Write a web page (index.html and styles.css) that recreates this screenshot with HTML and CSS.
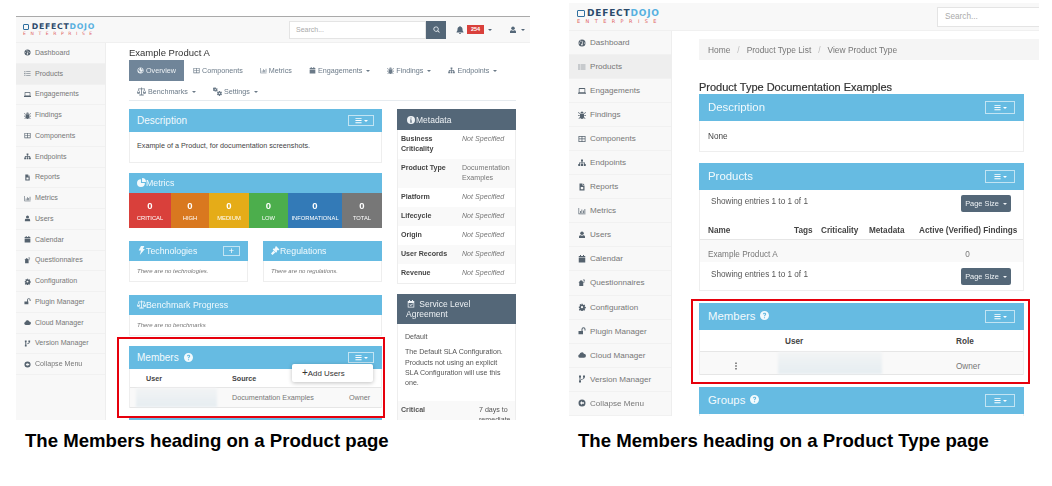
FILE: index.html
```html
<!DOCTYPE html>
<html lang="en">

<head>
    <meta charset="UTF-8">
    <title>Members heading</title>
    <link rel="stylesheet" href="styles.css">
</head>

<body>
    <svg class="sprite" xmlns="http://www.w3.org/2000/svg">
        <symbol id="i-gauge" viewBox="0 0 16 16"><path d="M8 1a7 7 0 1 0 0 14A7 7 0 0 0 8 1zM3 9a1 1 0 1 1 0-2 1 1 0 0 1 0 2zm2-4a1 1 0 1 1 0-2 1 1 0 0 1 0 2zm3-1.500a1 1 0 1 1 0 2 1 1 0 0 1 0-2zM8 13a1.800 1.800 0 0 1-.6-3.500L9.500 5l1 .4-1.600 4.400A1.800 1.800 0 0 1 8 13zm5-4a1 1 0 1 1 0-2 1 1 0 0 1 0 2z"/></symbol>
        <symbol id="i-globe" viewBox="0 0 16 16"><path d="M8 1a7 7 0 1 0 0 14A7 7 0 0 0 8 1zM3 5l2-2 2 .5L6 5 4.500 6 6 8l2 1-1 4-2-3-2-2zm7-3 3 2.500-1 1.500-3-1zm1 7 2.500-1-1 4-2 1.500z"/></symbol>
        <symbol id="i-list" viewBox="0 0 16 16"><path d="M1 3h2v2H1zm4 .3h10v1.400H5zM1 7h2v2H1zm4 .3h10v1.400H5zM1 11h2v2H1zm4 .3h10v1.400H5z"/></symbol>
        <symbol id="i-inbox" viewBox="0 0 16 16"><path fill-rule="evenodd" d="M3 2h10a1.500 1.500 0 0 1 1.500 1.500v7L16 12v1.500H0V12l1.500-1.500v-7A1.500 1.500 0 0 1 3 2zm0 2v6.500h10V4z"/></symbol>
        <symbol id="i-bug" viewBox="0 0 16 16"><path d="M5 4a3 3 0 0 1 6 0zM4.500 5h7A4 4 0 0 1 12 7v5a4 4 0 0 1-8 0V7a4 4 0 0 1 .5-2zM0 3l1-1 3 3-1 1zm16 0-1-1-3 3 1 1zM0 8.500h3.500V10H0zm16 0h-3.500V10H16zM1 15l3-3 1 1-3 3zm14 0-3-3-1 1 3 3z"/></symbol>
        <symbol id="i-table" viewBox="0 0 16 16"><path fill-rule="evenodd" d="M1 2h14v12H1zm1.500 1.500v3.700h4.700V3.500zm6.200 0v3.700h4.800V3.500zM2.500 8.700v3.800h4.700V8.700zm6.200 0v3.800h4.800V8.700z"/></symbol>
        <symbol id="i-sitemap" viewBox="0 0 16 16"><path d="M6 1h4v4H8.700v2H14v3h1.500v4h-4v-4h1V8.300H8.700V10H10v4H6v-4h1.300V8.300H3.500V10h1v4h-4v-4H2V7h5.300V5H6z"/></symbol>
        <symbol id="i-file" viewBox="0 0 16 16"><path fill-rule="evenodd" d="M3 1h6v4h4v10H3zm7 0 3 3h-3zM5.500 8v4.500h5V8z"/></symbol>
        <symbol id="i-chart" viewBox="0 0 16 16"><path d="M1 2h1.300v11H15v1.300H1zm3 6h1.500v4H4zm3-3h1.500v7H7zm3 2h1.500v5H10zm3-3h1.500v8H13z"/></symbol>
        <symbol id="i-user" viewBox="0 0 16 16"><circle cx="8" cy="4.500" r="3.500"/><path d="M2 14v-2.500C2 9.500 3.500 8.500 5 8.500c1.800 1.200 4.200 1.200 6 0 1.500 0 3 1 3 3V14z"/></symbol>
        <symbol id="i-cal" viewBox="0 0 16 16"><path d="M4 0h2v2h4V0h2v2h2.500v3h-13V2H4zM1.500 6h13v9h-13z"/></symbol>
        <symbol id="i-calcheck" viewBox="0 0 16 16"><path fill-rule="evenodd" d="M4 0h2v2h4V0h2v2h2.500v13h-13V2H4zM3 6v7.500h10V6zm2 3.500 1-1 1.500 1.500L11 7l1 1-4.500 4z"/></symbol>
        <symbol id="i-quest" viewBox="0 0 16 16"><path d="M6 2 1 7h1.500v7h8V7H12zM12 1a2 2 0 0 1 2 2c0 1-1.500 1.500-1.500 2.500h-1.200c0-1.500 1.500-1.800 1.500-2.500a.8.800 0 0 0-1.600 0H9.500A2 2 0 0 1 12 1zm-.6 5.200h1.200v1.200h-1.200z"/></symbol>
        <symbol id="i-gear" viewBox="0 0 16 16"><path fill-rule="evenodd" d="M6.500 1h3l.4 2 1.300.6 1.800-1.100 2 2-1.100 1.800.6 1.300 2 .4v3l-2 .4-.6 1.300 1.100 1.800-2 2-1.800-1.100-1.300.6-.4 2h-3l-.4-2-1.300-.6-1.800 1.100-2-2 1.100-1.800L3 10.700l-2-.4v-3l2-.4.600-1.300-1.100-1.800 2-2 1.800 1.100L7.600 3zM8 6a2.500 2.500 0 1 0 0 5 2.500 2.500 0 0 0 0-5z" transform="translate(.8 .6) scale(.9)"/></symbol>
        <symbol id="i-unlock" viewBox="0 0 16 16"><path d="M1 8h9v6.500H1zM7 8V4.500a4 4 0 0 1 8 0V7h-2V4.500a2 2 0 0 0-4 0V8z"/></symbol>
        <symbol id="i-cloud" viewBox="0 0 16 16"><path d="M4 13.500a3.500 3.500 0 0 1-.8-6.900A4.500 4.500 0 0 1 11.800 5.500 4 4 0 0 1 12 13.500z"/></symbol>
        <symbol id="i-branch" viewBox="0 0 16 16"><path fill-rule="evenodd" d="M2 1h4v4H5v6h1v4H2v-4h1V5H2zm8 0h4v4h-1c0 3-3 4-7 4.800V8.500c3-.6 5-1 5-3.500h-1z"/></symbol>
        <symbol id="i-back" viewBox="0 0 16 16"><path fill-rule="evenodd" d="M8 1a7 7 0 1 1 0 14A7 7 0 0 1 8 1zM8 4 4 8l4 4V9.500h4v-3H8z"/></symbol>
        <symbol id="i-scale" viewBox="0 0 16 16"><path fill-rule="evenodd" d="M7.300 1h1.400v1.500H14V4h-.5l2.500 6c0 1.200-1.300 2-2.700 2s-2.700-.8-2.700-2l2.300-6H8.700v9.500H12V15H4v-1.500h3.300V4H3.100l2.300 6c0 1.200-1.300 2-2.700 2S0 11.200 0 10l2.500-6H2V2.500h5.300zM2.700 5.500 1.300 9.500h2.800zm10.600 0-1.400 4h2.800z"/></symbol>
        <symbol id="i-cogs" viewBox="0 0 16 16"><path fill-rule="evenodd" d="M3 1h2l.3 1 1 .5 1-.5 1 1.700-.8.800v1l.8.800-1 1.700-1-.5-1 .5L5 8H3l-.3-1-1-.5-1 .5-1-1.700.8-.8v-1l-.8-.8 1-1.700 1 .5 1-.5zm1 2.600a1 1 0 1 0 0 2 1 1 0 0 0 0-2zM10.500 7h2l.3 1.200 1 .5 1.200-.5 1 1.700-1 .9v1.200l1 .9-1 1.700-1.200-.5-1 .5-.3 1.200h-2l-.3-1.200-1-.5-1.200.5-1-1.700 1-.9V10.800l-1-.9 1-1.700 1.200.5 1-.5zm1 3a1.300 1.300 0 1 0 0 2.600 1.300 1.300 0 0 0 0-2.600z"/></symbol>
        <symbol id="i-bolt" viewBox="0 0 16 16"><path d="M7 0h6l-2.500 5.500H14L5 16l2-8H3z"/></symbol>
        <symbol id="i-gavel" viewBox="0 0 16 16"><path d="M9 0l6 6-2 2-1-1-2 2 1 1-2 2-6-6 2-2 1 1 2-2-1-1zM4.500 8.500l3 3L2.500 16 0 13.500z"/></symbol>
        <symbol id="i-pie" viewBox="0 0 16 16"><path d="M7 2v7h7a7 7 0 1 1-7-7zm2-2a7 7 0 0 1 7 7H9z"/></symbol>
        <symbol id="i-info" viewBox="0 0 16 16"><path fill-rule="evenodd" d="M8 0a8 8 0 1 1 0 16A8 8 0 0 1 8 0zM7 3v2h2V3zM6 7v1.500h1v3H6V13h4v-1.500H9V7z"/></symbol>
        <symbol id="i-help" viewBox="0 0 16 16"><path fill-rule="evenodd" d="M8 0a8 8 0 1 1 0 16A8 8 0 0 1 8 0zM7 11v2h2v-2zM8 3C6.200 3 5 4 5 5.700h2c0-.6.400-1 1-1s1 .3 1 .9c0 1-2 1.300-2 3.700h2c0-1.600 2-1.900 2-3.900C11 3.900 9.700 3 8 3z"/></symbol>
        <symbol id="i-bell" viewBox="0 0 16 16"><path d="M8 0a1.200 1.200 0 0 1 1.200 1.300C11.500 1.800 13 3.700 13 6c0 4 1 5 2 6v1H1v-1c1-1 2-2 2-6 0-2.300 1.500-4.200 3.800-4.700A1.200 1.200 0 0 1 8 0zM6 14h4a2 2 0 0 1-4 0z"/></symbol>
        <symbol id="i-search" viewBox="0 0 16 16"><path fill-rule="evenodd" d="M7 1a6 6 0 0 1 4.800 9.500l3.700 3.700-1.300 1.300-3.700-3.700A6 6 0 1 1 7 1zm0 1.800a4.200 4.200 0 1 0 0 8.400 4.200 4.200 0 0 0 0-8.400z"/></symbol>
        <symbol id="i-bars" viewBox="0 0 16 16"><path d="M1 2h14v2.200H1zm0 4.900h14v2.200H1zm0 4.900h14V14H1z"/></symbol>
        <symbol id="i-dots" viewBox="0 0 16 16"><path d="M6.500 1h3v3h-3zm0 5.500h3v3h-3zm0 5.500h3v3h-3z"/></symbol>
    </svg>

    <div class="page">

        <section class="shot shot-product">
            <div class="app">
                <header class="navbar">
                    <div class="logo">
                        <div class="logo-top"><span class="logo-mark"></span><span class="logo-defect">DEFECT</span><span class="logo-dojo">DOJO</span></div>
                        <div class="logo-sub">ENTERPRISE</div>
                    </div>
                    <div class="search">
                        <span class="search-input">Search...</span>
                        <span class="search-btn"><svg class="i"><use href="#i-search"/></svg></span>
                    </div>
                    <div class="nav-bell">
                        <svg class="i"><use href="#i-bell"/></svg>
                        <span class="badge">254</span>
                        <span class="caret"></span>
                    </div>
                    <div class="nav-user">
                        <svg class="i"><use href="#i-user"/></svg>
                        <span class="caret"></span>
                    </div>
                </header>
                <div class="body-row">
                    <nav class="sidebar">
                        <a class="side-item"><svg class="i"><use href="#i-gauge"/></svg>Dashboard</a>
                        <a class="side-item active"><svg class="i"><use href="#i-list"/></svg>Products</a>
                        <a class="side-item"><svg class="i"><use href="#i-inbox"/></svg>Engagements</a>
                        <a class="side-item"><svg class="i"><use href="#i-bug"/></svg>Findings</a>
                        <a class="side-item"><svg class="i"><use href="#i-table"/></svg>Components</a>
                        <a class="side-item"><svg class="i"><use href="#i-sitemap"/></svg>Endpoints</a>
                        <a class="side-item"><svg class="i"><use href="#i-file"/></svg>Reports</a>
                        <a class="side-item"><svg class="i"><use href="#i-chart"/></svg>Metrics</a>
                        <a class="side-item"><svg class="i"><use href="#i-user"/></svg>Users</a>
                        <a class="side-item"><svg class="i"><use href="#i-cal"/></svg>Calendar</a>
                        <a class="side-item"><svg class="i"><use href="#i-quest"/></svg>Questionnaires</a>
                        <a class="side-item"><svg class="i"><use href="#i-gear"/></svg>Configuration</a>
                        <a class="side-item"><svg class="i"><use href="#i-unlock"/></svg>Plugin Manager</a>
                        <a class="side-item"><svg class="i"><use href="#i-cloud"/></svg>Cloud Manager</a>
                        <a class="side-item"><svg class="i"><use href="#i-branch"/></svg>Version Manager</a>
                        <a class="side-item"><svg class="i"><use href="#i-back"/></svg>Collapse Menu</a>
                    </nav>
                    <main class="content">
                        <h2 class="page-title">Example Product A</h2>
                        <div class="tabs">
                            <a class="tab active"><svg class="i"><use href="#i-globe"/></svg>Overview</a>
                            <a class="tab"><svg class="i"><use href="#i-table"/></svg>Components</a>
                            <a class="tab"><svg class="i"><use href="#i-chart"/></svg>Metrics</a>
                            <a class="tab"><svg class="i"><use href="#i-cal"/></svg>Engagements<span class="caret"></span></a>
                            <a class="tab"><svg class="i"><use href="#i-bug"/></svg>Findings<span class="caret"></span></a>
                            <a class="tab"><svg class="i"><use href="#i-sitemap"/></svg>Endpoints<span class="caret"></span></a>
                            <a class="tab tab-wide"><svg class="i"><use href="#i-scale"/></svg>Benchmarks<span class="caret"></span></a>
                            <a class="tab tab-wide"><svg class="i"><use href="#i-cogs"/></svg>Settings<span class="caret"></span></a>
                        </div>
                        <div class="columns">
                            <div class="col-main">
                                <div class="panel panel-desc">
                                    <div class="panel-head">Description<span class="menu-btn"><svg class="i"><use href="#i-bars"/></svg><span class="caret"></span></span></div>
                                    <p class="panel-text">Example of a Product, for documentation screenshots.</p>
                                </div>
                                <div class="panel panel-metrics">
                                    <div class="panel-head head-sm"><svg class="i"><use href="#i-pie"/></svg>Metrics</div>
                                    <div class="metric-row">
                                        <div class="metric m-critical"><b>0</b><span>CRITICAL</span></div>
                                        <div class="metric m-high"><b>0</b><span>HIGH</span></div>
                                        <div class="metric m-medium"><b>0</b><span>MEDIUM</span></div>
                                        <div class="metric m-low"><b>0</b><span>LOW</span></div>
                                        <div class="metric m-info"><b>0</b><span>INFORMATIONAL</span></div>
                                        <div class="metric m-total"><b>0</b><span>TOTAL</span></div>
                                    </div>
                                </div>
                                <div class="panel-pair">
                                    <div class="panel panel-small">
                                        <div class="panel-head head-sm"><svg class="i"><use href="#i-bolt"/></svg>Technologies<span class="menu-btn menu-plus">+</span></div>
                                        <p class="panel-note">There are no technologies.</p>
                                    </div>
                                    <div class="panel panel-small">
                                        <div class="panel-head head-sm"><svg class="i"><use href="#i-gavel"/></svg>Regulations</div>
                                        <p class="panel-note">There are no regulations.</p>
                                    </div>
                                </div>
                                <div class="panel panel-small panel-bench">
                                    <div class="panel-head head-sm"><svg class="i"><use href="#i-scale"/></svg>Benchmark Progress</div>
                                    <p class="panel-note">There are no benchmarks</p>
                                </div>
                                <div class="panel panel-members">
                                    <div class="panel-head">Members<svg class="i help"><use href="#i-help"/></svg><span class="menu-btn"><svg class="i"><use href="#i-bars"/></svg><span class="caret"></span></span></div>
                                    <div class="member-grid member-head"><span>User</span><span>Source</span><span></span></div>
                                    <div class="member-grid member-row"><span class="blurred"></span><span>Documentation Examples</span><span>Owner</span></div>
                                    <div class="dropdown"><span class="plus">+</span>Add Users</div>
                                </div>
                                <div class="panel-head panel-next"></div>
                            </div>
                            <aside class="col-side">
                                <div class="panel-dark">
                                    <div class="dark-head"><svg class="i"><use href="#i-info"/></svg>Metadata</div>
                                    <div class="meta-row tall"><b>Business Criticality</b><i>Not Specified</i></div>
                                    <div class="meta-row tall odd"><b>Product Type</b><span>Documentation Examples</span></div>
                                    <div class="meta-row"><b>Platform</b><i>Not Specified</i></div>
                                    <div class="meta-row odd"><b>Lifecycle</b><i>Not Specified</i></div>
                                    <div class="meta-row"><b>Origin</b><i>Not Specified</i></div>
                                    <div class="meta-row odd"><b>User Records</b><i>Not Specified</i></div>
                                    <div class="meta-row"><b>Revenue</b><i>Not Specified</i></div>
                                </div>
                                <div class="panel-dark">
                                    <div class="dark-head dark-head-sla"><svg class="i"><use href="#i-calcheck"/></svg> Service Level<br>Agreement</div>
                                    <div class="sla-body">
                                        <p>Default</p>
                                        <p>The Default SLA Configuration. Products not using an explicit SLA Configuration will use this one.</p>
                                    </div>
                                    <div class="sla-row"><b>Critical</b><span>7 days to remediate</span></div>
                                </div>
                            </aside>
                        </div>
                    </main>
                </div>
            </div>
            <div class="callout"></div>
        </section>

        <section class="shot shot-type">
            <div class="app">
                <header class="navbar">
                    <div class="logo">
                        <div class="logo-top"><span class="logo-mark"></span><span class="logo-defect">DEFECT</span><span class="logo-dojo">DOJO</span></div>
                        <div class="logo-sub">ENTERPRISE</div>
                    </div>
                    <div class="search"><span class="search-input">Search...</span></div>
                </header>
                <div class="body-row">
                    <nav class="sidebar">
                        <a class="side-item"><svg class="i"><use href="#i-gauge"/></svg>Dashboard</a>
                        <a class="side-item active"><svg class="i"><use href="#i-list"/></svg>Products</a>
                        <a class="side-item"><svg class="i"><use href="#i-inbox"/></svg>Engagements</a>
                        <a class="side-item"><svg class="i"><use href="#i-bug"/></svg>Findings</a>
                        <a class="side-item"><svg class="i"><use href="#i-table"/></svg>Components</a>
                        <a class="side-item"><svg class="i"><use href="#i-sitemap"/></svg>Endpoints</a>
                        <a class="side-item"><svg class="i"><use href="#i-file"/></svg>Reports</a>
                        <a class="side-item"><svg class="i"><use href="#i-chart"/></svg>Metrics</a>
                        <a class="side-item"><svg class="i"><use href="#i-user"/></svg>Users</a>
                        <a class="side-item"><svg class="i"><use href="#i-cal"/></svg>Calendar</a>
                        <a class="side-item"><svg class="i"><use href="#i-quest"/></svg>Questionnaires</a>
                        <a class="side-item"><svg class="i"><use href="#i-gear"/></svg>Configuration</a>
                        <a class="side-item"><svg class="i"><use href="#i-unlock"/></svg>Plugin Manager</a>
                        <a class="side-item"><svg class="i"><use href="#i-cloud"/></svg>Cloud Manager</a>
                        <a class="side-item"><svg class="i"><use href="#i-branch"/></svg>Version Manager</a>
                        <a class="side-item"><svg class="i"><use href="#i-back"/></svg>Collapse Menu</a>
                    </nav>
                    <main class="content">
                        <div class="breadcrumb">
                            <span>Home</span><em>/</em><span>Product Type List</span><em>/</em><span>View Product Type</span>
                        </div>
                        <h2 class="page-title">Product Type Documentation Examples</h2>
                        <div class="panel panel-desc">
                            <div class="panel-head">Description<span class="menu-btn"><svg class="i"><use href="#i-bars"/></svg><span class="caret"></span></span></div>
                            <p class="panel-text">None</p>
                        </div>
                        <div class="panel panel-products">
                            <div class="panel-head">Products<span class="menu-btn"><svg class="i"><use href="#i-bars"/></svg><span class="caret"></span></span></div>
                            <div class="entries"><span class="entries-text">Showing entries 1 to 1 of 1</span><span class="page-size">Page Size<span class="caret"></span></span></div>
                            <div class="product-grid product-head"><span>Name</span><span>Tags</span><span>Criticality</span><span>Metadata</span><span class="center">Active (Verified) Findings</span></div>
                            <div class="product-grid product-row"><span>Example Product A</span><span></span><span></span><span></span><span class="center">0</span></div>
                            <div class="entries entries-foot"><span class="entries-text">Showing entries 1 to 1 of 1</span><span class="page-size">Page Size<span class="caret"></span></span></div>
                        </div>
                        <div class="panel panel-members">
                            <div class="panel-head">Members<svg class="i help"><use href="#i-help"/></svg><span class="menu-btn"><svg class="i"><use href="#i-bars"/></svg><span class="caret"></span></span></div>
                            <div class="member-grid member-head"><span></span><span>User</span><span>Role</span></div>
                            <div class="member-grid member-row"><span class="dots"><svg class="i"><use href="#i-dots"/></svg></span><span class="blurred"></span><span class="role">Owner</span></div>
                        </div>
                        <div class="panel panel-groups">
                            <div class="panel-head">Groups<svg class="i help"><use href="#i-help"/></svg><span class="menu-btn"><svg class="i"><use href="#i-bars"/></svg><span class="caret"></span></span></div>
                        </div>
                    </main>
                </div>
            </div>
            <div class="callout"></div>
        </section>

        <p class="caption">The Members heading on a Product page</p>
        <p class="caption">The Members heading on a Product Type page</p>
    </div>
</body>

</html>
```

FILE: styles.css
```css
* {
    box-sizing: border-box;
}

body {
    margin: 0;
    background: #fff;
    font-family: "Liberation Sans", Arial, sans-serif;
    color: #333;
}

p,
h2 {
    margin: 0;
    font-weight: normal;
}

.sprite {
    display: none;
}

.page {
    display: grid;
    grid-template-columns: 553px 483px;
    grid-template-rows: 431px auto;
    padding-left: 16px;
}

.caption {
    padding-left: 9px;
    font-size: 18.600px;
    line-height: 20px;
    font-weight: bold;
    color: #000;
}

/* one screenshot */
.shot {
    position: relative;
}

.app {
    overflow: hidden;
    filter: blur(0.4px);
}

.shot-product {
    width: 514px;
    height: 404px;
    margin-top: 16px;
}

.shot-product .app {
    height: 404px;
    border-top: 1px solid #aaa;
}

.shot-type {
    width: 470px;
    height: 413px;
    margin-top: 3px;
}

.shot-type .app {
    height: 413px;
}

.callout {
    position: absolute;
    border: 2px solid #e6000c;
}

.shot-product .callout {
    left: 101px;
    top: 321px;
    width: 268px;
    height: 81px;
}

.shot-type .callout {
    left: 122px;
    top: 296px;
    width: 339px;
    height: 85px;
}

.i {
    display: inline-block;
    width: 1em;
    height: 1em;
    fill: currentColor;
    flex: none;
}

.caret {
    display: inline-block;
    width: 0;
    height: 0;
    margin-left: 4px;
    vertical-align: middle;
    border-top: 2px solid currentColor;
    border-left: 2px solid transparent;
    border-right: 2px solid transparent;
}

/* top bar */
.navbar {
    display: flex;
    align-items: center;
    background: #f8f8f8;
    border-bottom: 1px solid #f0f0f0;
}

.shot-product .navbar {
    height: 26px;
    padding-left: 7px;
}

.shot-type .navbar {
    height: 28px;
    padding-left: 8px;
}

.logo {
    display: flex;
    flex-direction: column;
    font-family: "DejaVu Sans", sans-serif;
    font-weight: bold;
    white-space: nowrap;
}

.logo-top {
    display: flex;
    align-items: center;
    line-height: 1;
}

.logo-mark {
    display: inline-block;
    border: 1.500px solid #2f6f9f;
    border-radius: 1px;
}

.logo-defect {
    color: #2b4a6b;
}

.logo-dojo {
    color: #57b0e0;
}

.logo-sub {
    color: #e0605f;
    font-weight: normal;
}

.shot-product .logo {
    width: 72px;
}

.shot-product .logo-top {
    font-size: 7.800px;
    letter-spacing: 0.7px;
}

.shot-product .logo-mark {
    width: 7px;
    height: 6px;
    margin-right: 3px;
}

.shot-product .logo-sub {
    font-size: 4.500px;
    line-height: 5px;
    letter-spacing: 4.600px;
}

.shot-type .logo {
    width: 83px;
}

.shot-type .logo-top {
    font-size: 9px;
    letter-spacing: 0.8px;
}

.shot-type .logo-mark {
    width: 8px;
    height: 7px;
    margin-right: 2px;
}

.shot-type .logo-sub {
    font-size: 5px;
    line-height: 6px;
    letter-spacing: 5.400px;
}

.search {
    display: flex;
}

.search-input {
    display: flex;
    align-items: center;
    background: #fff;
    border: 1px solid #e4e4e4;
    color: #aaa;
}

.shot-product .search {
    margin-left: 194px;
}

.shot-product .search-input {
    width: 137px;
    height: 18px;
    padding-left: 6px;
    font-size: 7px;
}

.search-btn {
    display: flex;
    align-items: center;
    justify-content: center;
    width: 20px;
    height: 18px;
    background: #546778;
    color: #e8eef2;
    font-size: 7px;
}

.shot-type .search {
    margin-left: 277px;
}

.shot-type .search-input {
    width: 103px;
    height: 20px;
    padding-left: 7px;
    font-size: 8.200px;
    border-right: 0;
}

.nav-bell,
.nav-user {
    display: flex;
    align-items: center;
    color: #546778;
    font-size: 8px;
}

.nav-bell {
    margin-left: 10px;
}

.nav-user {
    margin-left: 17px;
}

.badge {
    margin-left: 3px;
    padding: 1px 4px;
    background: #d9403b;
    color: #fff;
    font-size: 5.500px;
    line-height: 7px;
    font-weight: bold;
}

/* sidebar */
.body-row {
    display: flex;
}

.sidebar {
    flex: none;
    background: #f8f8f8;
    border-right: 1px solid #eee;
}

.shot-product .sidebar {
    width: 90px;
    height: 380px;
}

.shot-type .sidebar {
    width: 103px;
    height: 385px;
}

.side-item {
    display: flex;
    align-items: center;
    border-bottom: 1px solid #f1f1f1;
    color: #777;
    white-space: nowrap;
}

.side-item .i {
    color: #55626e;
}

.side-item.active {
    background: #eee;
}

.shot-product .side-item {
    height: 20.750px;
    padding-left: 8px;
    font-size: 7.100px;
}

.shot-product .side-item .i {
    width: 7px;
    height: 7px;
    margin-right: 4px;
}

.shot-type .side-item {
    height: 24.060px;
    padding-left: 9px;
    font-size: 8.100px;
}

.shot-type .side-item .i {
    width: 8px;
    height: 8px;
    margin-right: 4px;
}

/* main area */
.content {
    flex: none;
}

.shot-product .content {
    width: 424px;
    padding: 1px 0 0 23px;
}

.shot-type .content {
    width: 367px;
    padding: 8px 0 0 27px;
}

.page-title {
    color: #333;
}

.shot-product .page-title {
    font-size: 9.500px;
    line-height: 16px;
    padding-top: 1px;
    height: 16px;
}

.shot-type .page-title {
    margin-top: 20px;
    font-size: 11px;
    line-height: 14px;
    -webkit-text-stroke: 0.2px #333;
}

.breadcrumb {
    display: flex;
    align-items: center;
    width: 340px;
    height: 21px;
    padding-left: 9px;
    background: #f5f5f5;
    color: #777;
    font-size: 8.400px;
}

.breadcrumb em {
    margin: 0 7px;
    color: #bbb;
    font-style: normal;
}

.tabs {
    display: flex;
    flex-wrap: wrap;
    column-gap: 1px;
    width: 387px;
    height: 41px;
    border-bottom: 1px solid #e6ebef;
}

.tab {
    display: flex;
    align-items: center;
    height: 21px;
    padding: 0 8px;
    color: #6b7a88;
    font-size: 7.200px;
    white-space: nowrap;
}

.tab .i {
    width: 7px;
    height: 7px;
    margin-right: 2px;
}

.tab.active {
    background: #708599;
    color: #eef2f5;
}

.tab-wide .i {
    width: 9px;
    height: 9px;
}

.columns {
    display: flex;
    gap: 15px;
    margin-top: 8px;
}

.col-main {
    width: 253px;
    flex: none;
}

.col-side {
    width: 119px;
    flex: none;
}

/* panels */
.panel {
    position: relative;
    background: #fff;
    border: 1px solid #eee;
    border-top: 0;
}

.panel-head {
    display: flex;
    align-items: center;
    background: #66bbe2;
    color: #f2fafd;
    white-space: nowrap;
}

.panel .panel-head {
    margin: 0 -1px;
}

.shot-product .panel-head {
    height: 23px;
    padding: 0 8px 1px;
    font-size: 10px;
}

.shot-type .panel-head {
    height: 27px;
    padding: 0 9px 2px;
    font-size: 11.400px;
}

.shot-product .panel-head.head-sm {
    height: 20px;
    font-size: 8.800px;
}

.panel-head .i {
    width: 9px;
    height: 9px;
}

.panel-head .help {
    margin-left: 5px;
}

.menu-btn {
    display: flex;
    align-items: center;
    justify-content: center;
    margin-left: auto;
    border: 1px solid rgba(255, 255, 255, 0.6);
    color: #fff;
}

.shot-product .menu-btn {
    width: 26px;
    height: 11px;
    margin-top: 1px;
}

.shot-type .menu-btn {
    width: 30px;
    height: 13px;
    margin-top: 2px;
}

.panel-head .menu-btn .i {
    width: 7px;
    height: 7px;
}

.menu-btn .caret {
    margin-left: 2px;
}

.shot-product .menu-plus {
    width: 17px;
    height: 10px;
    font-size: 9px;
    line-height: 1;
}

.panel-text {
    color: #444;
}

.shot-product .panel-text {
    padding: 9px 7px;
    font-size: 7.200px;
    line-height: 10px;
}

.shot-type .panel-text {
    padding: 11px 8px;
    font-size: 8.200px;
    line-height: 10px;
}

.shot-product .panel-desc {
    height: 54px;
}

.shot-type .panel-desc {
    height: 58px;
}

.panel-metrics {
    height: 55px;
    margin-top: 10px;
    border-bottom: 0;
}

.metric-row {
    display: flex;
    height: 35px;
    margin: 0 -1px;
}

.metric {
    display: flex;
    flex-direction: column;
    align-items: center;
    color: #fff;
    padding-top: 7px;
}

.metric b {
    font-size: 9.500px;
    line-height: 12px;
}

.metric span {
    font-size: 5.800px;
    line-height: 9px;
    margin-top: 2px;
}

.m-critical {
    width: 42px;
    background: #d9403b;
}

.m-high {
    width: 38px;
    background: #d9781f;
}

.m-medium {
    width: 40px;
    background: #e5ac18;
}

.m-low {
    width: 39px;
    background: #4cae4c;
}

.m-info {
    width: 54px;
    background: #337ab7;
}

.m-total {
    width: 40px;
    background: #777;
}

.panel-pair {
    display: flex;
    justify-content: space-between;
    margin-top: 13px;
}

.panel-pair .panel-small {
    width: 119px;
}

.panel-small {
    height: 41px;
}

.panel-bench {
    margin-top: 13px;
}

.panel-note {
    padding: 6px 7px;
    color: #777;
    font-size: 6px;
    line-height: 9px;
    font-style: italic;
}

/* members */
.shot-product .panel-members {
    height: 62px;
    margin-top: 10px;
}

.shot-product .member-grid {
    display: grid;
    grid-template-columns: 102px 117px 1fr;
    align-items: center;
    font-size: 7.200px;
}

.shot-product .member-head {
    height: 19px;
    padding-top: 1px;
    border-bottom: 1px solid #e6e6e6;
}

.shot-product .member-head span:first-child {
    padding-left: 16px;
}

.shot-product .member-row {
    height: 20px;
}

.member-head {
    font-weight: bold;
    color: #444;
}

.member-row {
    background: #f9f9f9;
    border-bottom: 1px solid #e6e6e6;
    color: #777;
}

.blurred {
    display: block;
    height: 100%;
    background: linear-gradient(180deg, #f2f4f5, #e6edf1);
    filter: blur(1px);
}

.shot-product .blurred {
    width: 81px;
    margin-left: 6px;
}

.dropdown {
    position: absolute;
    left: 162px;
    top: 18px;
    width: 81px;
    height: 18px;
    padding-left: 10px;
    background: #fff;
    border-radius: 2px;
    box-shadow: 0 1px 4px rgba(0, 0, 0, 0.25);
    color: #333;
    font-size: 7.900px;
    line-height: 18px;
    white-space: nowrap;
}

.plus {
    font-size: 10px;
}

.panel-next {
    height: 10px;
    margin-top: 10px;
}

/* side column */
.panel-dark {
    background: #fff;
    border: 1px solid #eee;
    border-top: 0;
    margin-bottom: 10px;
}

.dark-head {
    display: flex;
    align-items: center;
    gap: 1px;
    height: 21px;
    padding-left: 10px;
    margin: 0 -1px;
    background: #546778;
    color: #eef2f5;
    font-size: 8.500px;
}

.dark-head .i {
    width: 8px;
    height: 8px;
}

.dark-head-sla {
    display: block;
    height: 30px;
    padding: 6px 9px;
    line-height: 9.500px;
}

.dark-head-sla .i {
    margin: 0 2px 0 1px;
    vertical-align: -1px;
}

.meta-row {
    display: grid;
    grid-template-columns: 61px 1fr;
    align-items: center;
    height: 19px;
    padding-left: 3px;
    font-size: 7.100px;
    line-height: 10.200px;
    background: #fff;
}

.meta-row.tall {
    height: 29px;
    align-items: start;
    padding-top: 4px;
}

.meta-row.odd {
    background: #f9f9f9;
}

.meta-row b {
    color: #444;
}

.meta-row i,
.meta-row span {
    color: #777;
}

.sla-body {
    height: 77px;
    padding: 8px 7px;
    color: #555;
    font-size: 7.100px;
    line-height: 10.300px;
}

.sla-body p + p {
    margin-top: 5px;
}

.sla-row {
    display: grid;
    grid-template-columns: 78px 1fr;
    padding: 4px 3px;
    background: #f9f9f9;
    color: #555;
    font-size: 7.100px;
    line-height: 10px;
}

/* product type page */
.shot-type .panel {
    width: 325px;
}

.panel-products {
    height: 128px;
    margin-top: 11px;
}

.entries {
    display: flex;
    justify-content: space-between;
    align-items: flex-start;
    height: 27px;
    padding: 5px 12px 0 11px;
    color: #555;
    font-size: 8.200px;
    line-height: 12px;
}

.entries-text {
    padding-top: 1px;
}

.entries-foot {
    height: 28px;
    padding-top: 6px;
}

.page-size {
    display: flex;
    align-items: center;
    justify-content: center;
    width: 50px;
    height: 17px;
    background: #546778;
    border-radius: 2px;
    color: #eef2f5;
    font-size: 7.400px;
}

.product-grid {
    display: grid;
    grid-template-columns: 86px 27px 48px 50px 97px;
    padding-left: 8px;
    align-items: center;
    font-size: 8.200px;
}

.product-head {
    height: 23px;
    padding-top: 4px;
    border-bottom: 1px solid #e6e6e6;
    font-weight: bold;
    color: #444;
    white-space: nowrap;
}

.product-row {
    height: 22px;
    padding-top: 6px;
    background: #f9f9f9;
    color: #777;
}

.center {
    text-align: center;
}

.shot-type .panel-members {
    height: 72px;
    margin-top: 12px;
}

.shot-type .member-grid {
    display: grid;
    grid-template-columns: 78px 178px 1fr;
    align-items: center;
    font-size: 8.200px;
}

.shot-type .member-head {
    height: 22px;
    padding-top: 1px;
    border-bottom: 1px solid #e6e6e6;
}

.shot-type .member-head span:nth-child(2) {
    padding-left: 7px;
}

.shot-type .member-row {
    height: 23px;
}

.role {
    padding-top: 6px;
}

.shot-type .blurred {
    width: 104px;
}

.dots {
    display: flex;
    justify-content: flex-end;
    color: #666;
    padding: 6px 38px 0 0;
}

.dots .i {
    width: 8px;
    height: 8px;
}

.panel-groups {
    height: 40px;
    margin-top: 12px;
}
```
